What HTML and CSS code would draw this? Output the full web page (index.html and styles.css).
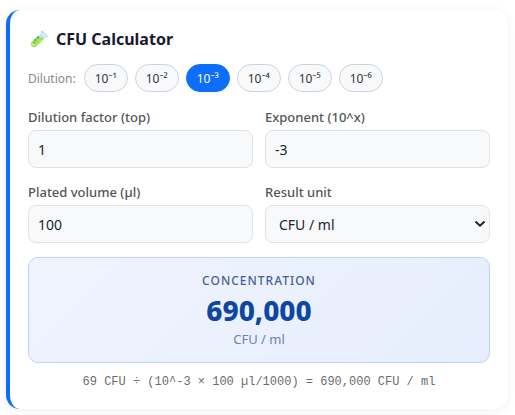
FILE: index.html
```html
<!DOCTYPE html>
<html lang="en">
<head>
<meta charset="utf-8">
<meta name="viewport" content="width=device-width, initial-scale=1">
<title>CFU Calculator</title>
<link rel="stylesheet" href="styles.css">
</head>
<body>
<main class="card">
  <h1 class="title">
    <svg class="tube" viewBox="0 0 22 20" aria-hidden="true">
      <path d="M14 3 4 12.500Q1.500 15.500 4 17.500T9 16.500L18.500 7.500Z" fill="#c5e5fb"/>
      <path d="M9.500 7.300 4 12.500Q1.500 15.500 4 17.500T9 16.500L16.500 9.300Z" fill="#a0e65a"/>
      <path d="M4 13.500Q2.500 16 4.500 16.800L7 16Z" fill="#c6f47c"/>
      <path d="m12.500 3 2-1.500 5.500 5.700-1.500 1.500Z" fill="#b3daf6"/>
      <path d="m14 4 4 4" stroke="#dff3ff" stroke-width="1.500"/>
      <g fill="#2fa866"><circle cx="10" cy="8.500" r="1.100"/><circle cx="7.500" cy="11" r="1"/><circle cx="6" cy="13.500" r=".8"/></g>
    </svg>
    CFU Calculator
  </h1>
  <div class="dilutions" role="group" aria-labelledby="dilution-label">
    <span class="dilution-label" id="dilution-label">Dilution:</span>
    <button class="chip" type="button">10⁻¹</button>
    <button class="chip" type="button">10⁻²</button>
    <button class="chip chip-active" type="button" aria-pressed="true">10⁻³</button>
    <button class="chip" type="button">10⁻⁴</button>
    <button class="chip" type="button">10⁻⁵</button>
    <button class="chip" type="button">10⁻⁶</button>
  </div>
  <form class="fields">
    <div class="field">
      <label for="factor">Dilution factor (top)</label>
      <input class="control" id="factor" type="text" value="1">
    </div>
    <div class="field">
      <label for="exponent">Exponent (10^x)</label>
      <input class="control" id="exponent" type="text" value="-3">
    </div>
    <div class="field">
      <label for="volume">Plated volume (µl)</label>
      <input class="control" id="volume" type="text" value="100">
    </div>
    <div class="field">
      <label for="unit">Result unit</label>
      <div class="select-wrap">
        <select class="control select" id="unit"><option>CFU / ml</option></select>
        <svg class="chevron" viewBox="0 0 12 8" aria-hidden="true"><path d="m1.500 1.500 4.500 4.200 4.500-4.200"/></svg>
      </div>
    </div>
  </form>
  <section class="result">
    <div class="result-label">Concentration</div>
    <div class="result-value">690,000</div>
    <div class="result-unit">CFU / ml</div>
  </section>
  <p class="formula">69 CFU ÷ (10^-3 × 100 µl/1000) = 690,000 CFU / ml</p>
</main>
</body>
</html>
```
FILE: styles.css
```css
* {
  box-sizing: border-box;
}

body {
  margin: 0;
  padding: 10px 7px 6px 6px;
  background: #fff;
  color: #212529;
  font-family: "Noto Sans", "Open Sans", sans-serif;
}

.card {
  padding: 18px;
  border-left: 4px solid #0d6efd;
  border-radius: 14px;
  background: #fff;
  box-shadow: 0 2px 12px rgba(0, 0, 0, 0.06);
}

.title {
  display: flex;
  align-items: center;
  gap: 6px;
  margin: 0 0 14px;
  color: #1a1a2e;
  font-size: 16px;
  font-weight: 700;
  line-height: 22px;
}

.tube {
  width: 22px;
  height: 20px;
  fill: none;
}

.dilutions {
  display: flex;
  flex-wrap: wrap;
  align-items: center;
  gap: 7px;
  margin-bottom: 16px;
}

.dilution-label {
  margin-right: 1px;
  color: #888;
  font-size: 12px;
}

.chip {
  height: 28px;
  padding: 0 10px;
  border: 1px solid #ced4da;
  border-radius: 14px;
  background: #f8f9fa;
  color: #333;
  font: 12px "Noto Sans", sans-serif;
}

.chip-active {
  border-color: #0d6efd;
  background: #0d6efd;
  color: #fff;
}

.fields {
  display: grid;
  grid-template-columns: 1fr 1fr;
  gap: 15px 12px;
  margin-bottom: 14px;
}

.field label {
  display: block;
  margin-bottom: 4px;
  color: #555;
  font-size: 13px;
  font-weight: 500;
  line-height: 18px;
}

.control {
  display: block;
  width: 100%;
  height: 38px;
  padding: 0 9px;
  border: 1px solid #dee2e6;
  border-radius: 8px;
  background: #f8f9fb;
  color: #212529;
  font: 14px "Noto Sans", sans-serif;
}

.select-wrap {
  position: relative;
}

.select {
  padding: 0 13px;
  appearance: none;
}

.chevron {
  position: absolute;
  top: 15px;
  right: 4px;
  width: 12px;
  height: 8px;
  fill: none;
  stroke: #212529;
  stroke-width: 2;
  pointer-events: none;
}

.result {
  padding: 14px;
  border: 1px solid #bdd0fb;
  border-radius: 10px;
  background: linear-gradient(135deg, #f0f4ff, #e6edfc);
  text-align: center;
}

.result-label {
  color: #4a5f94;
  font-size: 12px;
  font-weight: 500;
  line-height: 18px;
  letter-spacing: 1px;
  text-transform: uppercase;
}

.result-value {
  color: #0d47a1;
  font-size: 28px;
  font-weight: 800;
  line-height: 40px;
}

.result-unit {
  color: #6c83b5;
  font-size: 13px;
  line-height: 18px;
}

.formula {
  margin: 10px 0 0;
  color: #6c6c6c;
  font-family: "Liberation Mono", monospace;
  font-size: 12px;
  line-height: 18px;
  text-align: center;
}
```
